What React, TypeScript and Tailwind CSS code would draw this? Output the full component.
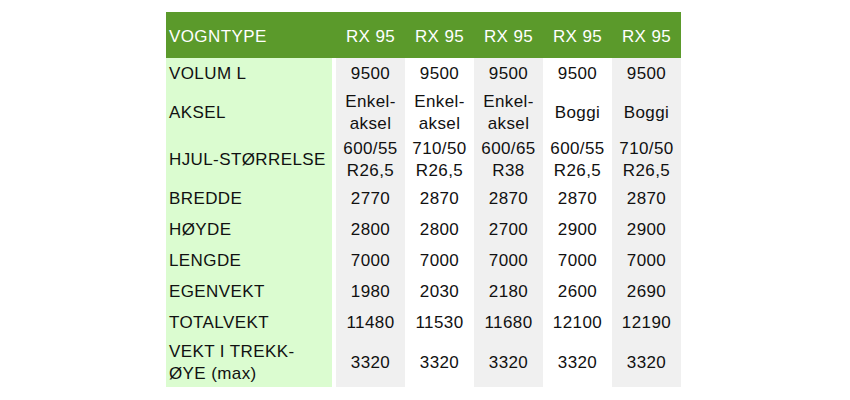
const columns = ["RX 95", "RX 95", "RX 95", "RX 95", "RX 95"];

type Row = {
  label: React.ReactNode;
  values: React.ReactNode[];
  height: string;
};

const rows: Row[] = [
  { label: "VOLUM L", values: ["9500", "9500", "9500", "9500", "9500"], height: "h-[31px]" },
  {
    label: "AKSEL",
    values: [
      <>Enkel-<br />aksel</>,
      <>Enkel-<br />aksel</>,
      <>Enkel-<br />aksel</>,
      "Boggi",
      "Boggi",
    ],
    height: "h-[47px]",
  },
  {
    label: "HJUL-STØRRELSE",
    values: [
      <>600/55<br />R26,5</>,
      <>710/50<br />R26,5</>,
      <>600/65<br />R38</>,
      <>600/55<br />R26,5</>,
      <>710/50<br />R26,5</>,
    ],
    height: "h-[47px]",
  },
  { label: "BREDDE", values: ["2770", "2870", "2870", "2870", "2870"], height: "h-[31px]" },
  { label: "HØYDE", values: ["2800", "2800", "2700", "2900", "2900"], height: "h-[31px]" },
  { label: "LENGDE", values: ["7000", "7000", "7000", "7000", "7000"], height: "h-[31px]" },
  { label: "EGENVEKT", values: ["1980", "2030", "2180", "2600", "2690"], height: "h-[31px]" },
  { label: "TOTALVEKT", values: ["11480", "11530", "11680", "12100", "12190"], height: "h-[31px]" },
  {
    label: <>VEKT I TREKK-<br />ØYE (max)</>,
    values: ["3320", "3320", "3320", "3320", "3320"],
    height: "h-[49px]",
  },
];

// every other data column is shaded
const colBg = ["bg-[#f0f0f0]", "bg-white", "bg-[#f0f0f0]", "bg-white", "bg-[#f0f0f0]"];

export default function App() {
  return (
    <div className="min-h-screen w-[850px] bg-white pl-[166px] pt-3 font-['Liberation_Sans',Arial,sans-serif] text-[17px] leading-[22px] tracking-[0.4px] text-[#111]">
      <div className="grid w-[515px] grid-cols-[166px_4px_repeat(5,69px)]">
        {/* Header */}
        <div className="col-span-2 flex h-[46px] items-center bg-[#5b9a2b] pl-[3px] pt-[3px] text-white">
          VOGNTYPE
        </div>
        {columns.map((c, i) => (
          <div key={i} className="flex h-[46px] items-center justify-center bg-[#5b9a2b] pt-[3px] text-white">
            {c}
          </div>
        ))}

        {/* Body */}
        {rows.map((row, r) => (
          <div key={r} className="contents">
            <div className={`flex items-center bg-[#dbfcd0] pl-[3px] ${row.height}`}>
              <span>{row.label}</span>
            </div>
            <div className="bg-white" />
            {row.values.map((v, i) => (
              <div key={i} className={`flex items-center justify-center text-center ${colBg[i]} ${row.height}`}>
                <span>{v}</span>
              </div>
            ))}
          </div>
        ))}
      </div>
    </div>
  );
}
